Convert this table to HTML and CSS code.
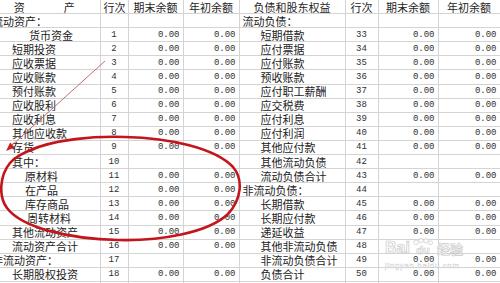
FILE: index.html
```html
<!DOCTYPE html>
<html lang="zh-CN">
<head>
<meta charset="utf-8">
<title>资产负债表</title>
<link rel="stylesheet" href="styles.css">
</head>
<body>
<div class="sheet">
  <table class="grid">
    <colgroup>
      <col class="c-name"><col class="c-no"><col class="c-amt3"><col class="c-amt4">
      <col class="c-name2"><col class="c-no2"><col class="c-amt7"><col class="c-amt8">
    </colgroup>
    <thead>
      <tr>
        <th class="hd hd-split"><span>资</span><span>产</span></th>
        <th class="hd">行次</th>
        <th class="hd">期末余额</th>
        <th class="hd">年初余额</th>
        <th class="hd">负债和股东权益</th>
        <th class="hd">行次</th>
        <th class="hd">期末余额</th>
        <th class="hd">年初余额</th>
      </tr>
    </thead>
    <tbody>
      <tr><td class="sec">流动资产：</td><td class="no"></td><td class="amt"></td><td class="amt"></td><td class="sec">流动负债：</td><td class="no"></td><td class="amt"></td><td class="amt"></td></tr>
      <tr><td class="ch3">货币资金</td><td class="no">1</td><td class="amt">0.00</td><td class="amt">0.00</td><td class="rch">短期借款</td><td class="no">33</td><td class="amt">0.00</td><td class="amt">0.00</td></tr>
      <tr><td class="ch">短期投资</td><td class="no">2</td><td class="amt">0.00</td><td class="amt">0.00</td><td class="rch">应付票据</td><td class="no">34</td><td class="amt">0.00</td><td class="amt">0.00</td></tr>
      <tr><td class="ch">应收票据</td><td class="no">3</td><td class="amt">0.00</td><td class="amt">0.00</td><td class="rch">应付账款</td><td class="no">35</td><td class="amt">0.00</td><td class="amt">0.00</td></tr>
      <tr><td class="ch">应收账款</td><td class="no">4</td><td class="amt">0.00</td><td class="amt">0.00</td><td class="rch">预收账款</td><td class="no">36</td><td class="amt">0.00</td><td class="amt">0.00</td></tr>
      <tr><td class="ch">预付账款</td><td class="no">5</td><td class="amt">0.00</td><td class="amt">0.00</td><td class="rch">应付职工薪酬</td><td class="no">37</td><td class="amt">0.00</td><td class="amt">0.00</td></tr>
      <tr><td class="ch">应收股利</td><td class="no">6</td><td class="amt">0.00</td><td class="amt">0.00</td><td class="rch">应交税费</td><td class="no">38</td><td class="amt">0.00</td><td class="amt">0.00</td></tr>
      <tr><td class="ch">应收利息</td><td class="no">7</td><td class="amt">0.00</td><td class="amt">0.00</td><td class="rch">应付利息</td><td class="no">39</td><td class="amt">0.00</td><td class="amt">0.00</td></tr>
      <tr><td class="ch">其他应收款</td><td class="no">8</td><td class="amt">0.00</td><td class="amt">0.00</td><td class="rch">应付利润</td><td class="no">40</td><td class="amt">0.00</td><td class="amt">0.00</td></tr>
      <tr><td class="ch">存货</td><td class="no">9</td><td class="amt">0.00</td><td class="amt">0.00</td><td class="rch">其他应付款</td><td class="no">41</td><td class="amt">0.00</td><td class="amt">0.00</td></tr>
      <tr><td class="ch">其中：</td><td class="no">10</td><td class="amt"></td><td class="amt"></td><td class="rch">其他流动负债</td><td class="no">42</td><td class="amt"></td><td class="amt"></td></tr>
      <tr><td class="ch2">原材料</td><td class="no">11</td><td class="amt">0.00</td><td class="amt">0.00</td><td class="rch">流动负债合计</td><td class="no">43</td><td class="amt">0.00</td><td class="amt">0.00</td></tr>
      <tr><td class="ch2">在产品</td><td class="no">12</td><td class="amt">0.00</td><td class="amt">0.00</td><td class="sec">非流动负债：</td><td class="no">44</td><td class="amt"></td><td class="amt"></td></tr>
      <tr><td class="ch2">库存商品</td><td class="no">13</td><td class="amt">0.00</td><td class="amt">0.00</td><td class="rch">长期借款</td><td class="no">45</td><td class="amt">0.00</td><td class="amt">0.00</td></tr>
      <tr><td class="ch2b">周转材料</td><td class="no">14</td><td class="amt">0.00</td><td class="amt">0.00</td><td class="rch">长期应付款</td><td class="no">46</td><td class="amt">0.00</td><td class="amt">0.00</td></tr>
      <tr><td class="ch">其他流动资产</td><td class="no">15</td><td class="amt">0.00</td><td class="amt">0.00</td><td class="rch">递延收益</td><td class="no">47</td><td class="amt">0.00</td><td class="amt">0.00</td></tr>
      <tr><td class="ch">流动资产合计</td><td class="no">16</td><td class="amt">0.00</td><td class="amt">0.00</td><td class="rch">其他非流动负债</td><td class="no">48</td><td class="amt"></td><td class="amt"></td></tr>
      <tr><td class="sec">非流动资产：</td><td class="no">17</td><td class="amt"></td><td class="amt"></td><td class="rch">非流动负债合计</td><td class="no">49</td><td class="amt">0.00</td><td class="amt">0.00</td></tr>
      <tr><td class="ch">长期股权投资</td><td class="no">18</td><td class="amt">0.00</td><td class="amt">0.00</td><td class="rch">负债合计</td><td class="no">50</td><td class="amt">0.00</td><td class="amt">0.00</td></tr>
      <tr><td class="ch"></td><td class="no"></td><td class="amt"></td><td class="amt"></td><td class="rch"></td><td class="no"></td><td class="amt"></td><td class="amt"></td></tr>
    </tbody>
  </table>

  <svg class="marks" width="500" height="283" viewBox="0 0 500 283">
    <line x1="105" y1="61" x2="11" y2="146" class="arrow-line"/>
    <polygon points="6,151 14.8,147.6 10.2,142.6" class="arrow-head"/>
    <path class="ring" d="M 28,151 C 55,139 95,136 125,137 C 170,138 215,148 233,167 C 244,180 241,200 228,214 C 208,233 160,241 118,240 C 70,239 22,228 7,208 C -2,196 0,175 10,163 C 15,157 22,153 34,149"/>
  </svg>

  <div class="watermark">
    <div class="wm-logo">
      <span class="wm-bai">Bai</span>
      <span class="wm-pawbox">
        <svg class="wm-paw" width="24" height="7" viewBox="0 0 24 7">
          <ellipse cx="5" cy="4.5" rx="2.2" ry="2.3"/>
          <ellipse cx="10" cy="2.6" rx="2.2" ry="2.2"/>
          <ellipse cx="15" cy="2.8" rx="2.2" ry="2.2"/>
          <ellipse cx="19.5" cy="4.8" rx="2" ry="2"/>
        </svg>
        <span class="wm-du">du</span>
      </span>
      <span class="wm-jy">经验</span>
    </div>
    <div class="wm-url">jingyan.baidu.com</div>
  </div>
</div>
</body>
</html>
```

FILE: styles.css
```css
html, body {
  margin: 0;
  padding: 0;
  background: #ffffff;
}

.sheet {
  position: relative;
  width: 500px;
  height: 283px;
  overflow: hidden;
  background: #ffffff;
}

.grid {
  border-collapse: collapse;
  table-layout: fixed;
  width: 511px;
  margin-left: -11px;
  margin-top: -1px;
  font-family: "Noto Sans CJK SC", "Liberation Sans", sans-serif;
  font-size: 11px;
  color: #222222;
}

.c-name { width: 111px; }
.c-no { width: 28px; }
.c-amt3 { width: 55px; }
.c-amt4 { width: 56px; }
.c-name2 { width: 106px; }
.c-no2 { width: 33px; }
.c-amt7 { width: 60px; }
.c-amt8 { width: 62px; }

.grid tr {
  height: 14.1px;
}

.grid th,
.grid td {
  border: 1px solid #d4d4d4;
  padding: 0 3px;
  line-height: 12px;
  white-space: nowrap;
  font-weight: normal;
  text-align: left;
  vertical-align: middle;
}

.grid tr > :first-child {
  border-left: none;
}

.grid th.hd {
  text-align: center;
  color: #262626;
}

.hd-split span + span {
  margin-left: 39px;
}

.sec { padding-left: 3px; }
.grid td.ch { padding-left: 23px; }
.grid td.ch2 { padding-left: 36px; }
.grid td.ch2b { padding-left: 38px; }
.grid td.ch3 { padding-left: 40px; }
.grid td.rch { padding-left: 21px; }

.grid td.no {
  text-align: center;
  font-family: "Liberation Mono", "DejaVu Sans Mono", monospace;
  font-size: 9px;
  color: #303030;
  padding: 0;
}

.grid td.amt {
  text-align: right;
  font-family: "Liberation Mono", "DejaVu Sans Mono", monospace;
  font-size: 9px;
  color: #303030;
  padding-right: 3px;
}

.marks {
  position: absolute;
  left: 0;
  top: 0;
  pointer-events: none;
}

.arrow-line {
  stroke: #b45a5a;
  stroke-width: 1;
  opacity: 0.85;
}

.arrow-head {
  fill: #cc1f24;
}

.ring {
  fill: none;
  stroke: #c2151c;
  stroke-width: 2.6;
  stroke-linecap: round;
  stroke-linejoin: round;
}

.watermark {
  position: absolute;
  left: 385px;
  top: 238px;
  width: 100px;
  opacity: 0.9;
}

.wm-logo {
  display: flex;
  align-items: flex-end;
  height: 18px;
}

.wm-bai {
  font-family: "Liberation Sans", sans-serif;
  font-weight: bold;
  font-size: 16px;
  line-height: 16px;
  color: rgba(255, 255, 255, 0.85);
  -webkit-text-stroke: 0.7px #c4c4c4;
}

.wm-pawbox {
  display: flex;
  flex-direction: column;
  align-items: center;
  margin-left: 1px;
}

.wm-paw {
  display: block;
  fill: rgba(255, 255, 255, 0.85);
  stroke: #c4c4c4;
  stroke-width: 0.7;
}

.wm-du {
  font-family: "Liberation Sans", sans-serif;
  font-weight: bold;
  font-size: 11px;
  line-height: 11px;
  color: rgba(255, 255, 255, 0.85);
  -webkit-text-stroke: 0.6px #c4c4c4;
}

.wm-jy {
  font-family: "Noto Sans CJK SC", sans-serif;
  font-weight: bold;
  font-size: 13px;
  line-height: 14px;
  margin-left: 2px;
  color: rgba(255, 255, 255, 0.85);
  -webkit-text-stroke: 0.6px #c4c4c4;
}

.wm-url {
  margin-top: 6px;
  font-family: "Liberation Sans", sans-serif;
  font-size: 8px;
  line-height: 8px;
  letter-spacing: 0.6px;
  color: rgba(255, 255, 255, 0.6);
  -webkit-text-stroke: 0.4px #cfcfcf;
}
```
